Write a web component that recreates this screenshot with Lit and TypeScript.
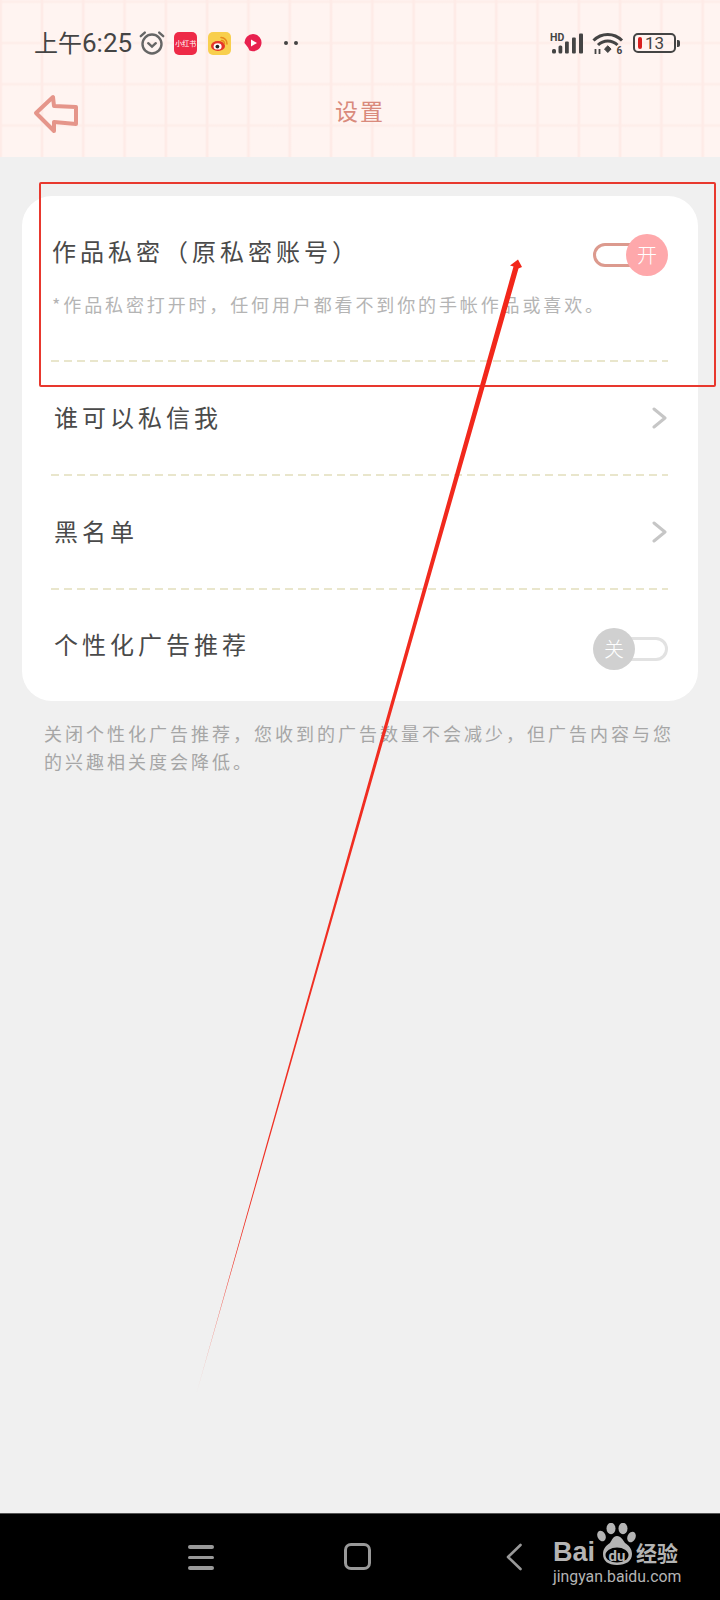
import { LitElement, css, html, svg } from 'lit';
import { customElement } from 'lit/decorators.js';

@customElement('app-root')
export class AppRoot extends LitElement {
  private toggle(on: boolean) {
    return html`
      <div class="toggle ${on ? 'on' : 'off'}">
        <div class="track"></div>
        <div class="knob">${on ? '开' : '关'}</div>
      </div>
    `;
  }

  private chevron() {
    return html`<svg class="chevron" width="16" height="22" viewBox="0 0 16 22">
      <path d="M2 2l11 9-11 9" fill="none" stroke="#c6c6c6" stroke-width="3" stroke-linejoin="round" stroke-linecap="round" />
    </svg>`;
  }

  private statusLeft() {
    return html`
      <div class="status-left">
        <span class="time">上午<span class="digits">6:25</span></span>
        <svg class="alarm" width="26" height="26" viewBox="0 0 26 26" fill="none" stroke="#666" stroke-width="2.4" stroke-linecap="round">
          <circle cx="13" cy="14" r="9.5" />
          <path d="M9.2 13.2l3.8 3.4 3.8-3.4" />
          <path d="M1.8 6.2l4-3.6M24.2 6.2l-4-3.6" />
        </svg>
        <div class="app-red">小红书</div>
        <svg class="weibo" width="23" height="23" viewBox="0 0 23 23">
          <rect width="23" height="23" rx="5" fill="#f8cf4e" />
          <ellipse cx="10" cy="14" rx="7" ry="5" fill="#e6352b" />
          <ellipse cx="9.6" cy="14.4" rx="4" ry="3.2" fill="#fff" />
          <circle cx="9.4" cy="14.6" r="1.9" fill="#222" />
          <path d="M13 5.5a6 6 0 0 1 6 6.5M13.5 8.5a3 3 0 0 1 3 3.3" fill="none" stroke="#e98a1e" stroke-width="1.6" stroke-linecap="round" />
        </svg>
        <svg class="play" width="20" height="20" viewBox="0 0 20 20">
          <path d="M10 1a8.6 8.6 0 1 1-3.5 16.5L5 14.5 1.5 10A8.6 8.6 0 0 1 10 1z" fill="#e8214f" />
          <path d="M8 6.4l6 3.6-6 3.6z" fill="#fff" />
        </svg>
        <span class="dots"><i></i><i></i></span>
      </div>
    `;
  }

  private statusRight() {
    return html`
      <div class="status-right">
        <svg width="36" height="24" viewBox="0 0 36 24" fill="#444">
          <text x="0" y="10" font-size="10.5" font-weight="700" font-family="Roboto, sans-serif">HD</text>
          <rect x="2" y="18" width="4" height="4.5" rx="1.5" />
          <rect x="8.5" y="14.5" width="3.8" height="8" rx="1.5" />
          <rect x="15" y="10.5" width="3.8" height="12" rx="1" />
          <rect x="22" y="6.5" width="3.8" height="16" rx="1" />
          <rect x="29" y="2.5" width="4" height="20" rx="1" />
        </svg>
        <svg width="32" height="24" viewBox="0 0 32 24" fill="none" stroke="#444" stroke-width="3">
          <path d="M1.5 9.5C9.5 1.5 22 1.5 30 9.5" />
          <path d="M6 14C11.5 8.5 20 8.5 25.5 14" />
          <path d="M12.5 18l3.3-3.2 3.3 3.2-3.3 3.5z" fill="#444" stroke-width="1" />
          <text x="24.5" y="23" font-size="10" font-weight="700" fill="#444" stroke="none" font-family="Roboto, sans-serif">6</text>
          <path d="M3.5 18v5M7.5 18v5" stroke-width="1.8" />
        </svg>
        <div class="battery">
          <div class="battery-body"><i></i><span>13</span></div>
          <div class="battery-nub"></div>
        </div>
      </div>
    `;
  }

  private navBar() {
    return html`
      <div class="navbar">
        <div class="menu"><i></i><i></i><i></i></div>
        <div class="home"></div>
        <svg class="back-sys" width="18" height="28" viewBox="0 0 18 28">
          <path d="M15.5 2L3 14l12.5 12" fill="none" stroke="#999" stroke-width="2.6" stroke-linecap="round" stroke-linejoin="round" />
        </svg>
        <div class="wm">
          <div class="wm-top">
            <span class="wm-bai">Bai</span>
            <svg class="paw" width="39" height="42" viewBox="0 0 39 42">
              <g fill="#b4b4b4">
                <ellipse cx="4.5" cy="13" rx="4" ry="5.5" transform="rotate(-25 4.5 13)" />
                <ellipse cx="14" cy="5.5" rx="4.5" ry="5.7" />
                <ellipse cx="26" cy="5.5" rx="4.5" ry="5.7" />
                <ellipse cx="34.5" cy="14" rx="4" ry="5.5" transform="rotate(25 34.5 14)" />
                <path d="M20 13c4 0 6 4 8 7 3 2 7 5 7 11 0 7-6 11-15 11S6 38 6 31c0-6 4-9 7-11 2-3 3-7 7-7z" />
              </g>
              <ellipse cx="20" cy="32" rx="11.5" ry="7.5" fill="#000" />
              <text x="20" y="37.5" text-anchor="middle" font-size="15" font-weight="700" fill="#b4b4b4" font-family="Roboto, sans-serif">du</text>
            </svg>
            <span class="wm-cn">经验</span>
          </div>
          <div class="wm-url">jingyan.baidu.com</div>
        </div>
      </div>
    `;
  }

  private annotation() {
    return html`
      <div class="mark-box"></div>
      <svg class="mark-arrow" width="720" height="1600" viewBox="0 0 720 1600">
        ${svg`<defs>
          <linearGradient id="fade" x1="517" y1="262" x2="196" y2="1395" gradientUnits="userSpaceOnUse">
            <stop offset="0" stop-color="#f2261a" />
            <stop offset="0.88" stop-color="#ef3327" />
            <stop offset="1" stop-color="#f2b0a8" />
          </linearGradient>
        </defs>
        <path d="M518 259.5L522 267 518.5 268.5 196 1395 513.5 266.5 510 265.5z" fill="url(#fade)" />`}
      </svg>
    `;
  }

  render() {
    return html`
      <div class="screen">
        <header class="top">
          <div class="status">
            ${this.statusLeft()} ${this.statusRight()}
          </div>
          <div class="titlebar">
            <svg class="back" width="46" height="40" viewBox="0 0 46 40">
              <path d="M3 19L20 3l1 9 22 1v17l-22-2 0 9z" fill="none" stroke="#e5958a" stroke-width="4" stroke-linejoin="round" />
            </svg>
            <div class="page-title">设置</div>
          </div>
        </header>
        <main class="body">
          <section class="card">
            <div class="row first">
              <div class="row-head">
                <span class="label">作品私密（原私密账号）</span>
                ${this.toggle(true)}
              </div>
              <div class="sub">*作品私密打开时，任何用户都看不到你的手帐作品或喜欢。</div>
            </div>
            <div class="dash"></div>
            <div class="row"><span class="label">谁可以私信我</span>${this.chevron()}</div>
            <div class="dash"></div>
            <div class="row"><span class="label">黑名单</span>${this.chevron()}</div>
            <div class="dash"></div>
            <div class="row last"><span class="label">个性化广告推荐</span>${this.toggle(false)}</div>
          </section>
          <p class="note">关闭个性化广告推荐，您收到的广告数量不会减少，但广告内容与您的兴趣相关度会降低。</p>
        </main>
        ${this.navBar()} ${this.annotation()}
      </div>
    `;
  }

  static styles = css`
    :host {
      display: block;
      font-family: "Noto Sans CJK SC", "Noto Sans", sans-serif;
    }
    .screen {
      position: relative;
      width: 720px;
      height: 1600px;
      display: flex;
      flex-direction: column;
      background: #f0f0f0;
      overflow: hidden;
    }

    /* header with the notebook grid */
    .top {
      height: 157px;
      background-color: #fff4f1;
      background-image:
        linear-gradient(90deg, transparent 0, #feebe7 1.5px, #feebe7 2.5px, transparent 4px),
        linear-gradient(180deg, transparent 0, #feeeea 1.5px, #feeeea 2.5px, transparent 4px);
      background-size: 41.3px 41.3px;
      background-position: 40px 41px;
    }
    .status {
      height: 84px;
      box-sizing: border-box;
      display: flex;
      align-items: center;
      justify-content: space-between;
      padding: 2px 40px 0 34px;
    }
    .status-left,
    .status-right {
      display: flex;
      align-items: center;
    }
    .time {
      font-size: 24px;
      color: #444;
      line-height: 1;
    }
    .digits {
      font-family: Roboto, sans-serif;
      font-size: 26px;
    }
    .alarm {
      margin-left: 7px;
    }
    .app-red {
      margin-left: 9px;
      width: 23px;
      height: 23px;
      border-radius: 5px;
      background: #ee2a47;
      color: #fff;
      font-size: 7px;
      line-height: 23px;
      text-align: center;
      white-space: nowrap;
    }
    .weibo {
      margin-left: 11px;
    }
    .play {
      margin-left: 12px;
    }
    .dots {
      display: flex;
      gap: 6px;
      margin-left: 21px;
    }
    .dots i {
      width: 4px;
      height: 4px;
      border-radius: 50%;
      background: #444;
    }
    .status-right {
      gap: 6px;
    }
    .battery {
      display: flex;
      align-items: center;
      gap: 1px;
      margin-left: 3px;
    }
    .battery-body {
      width: 43px;
      height: 20px;
      box-sizing: border-box;
      border: 2px solid #444;
      border-radius: 5px;
      display: flex;
      align-items: center;
      gap: 3px;
      padding-left: 3px;
      color: #444;
      font-family: Roboto, sans-serif;
      font-size: 17px;
      line-height: 1;
    }
    .battery-body i {
      width: 4px;
      height: 12px;
      border-radius: 2px;
      background: #d9201f;
    }
    .battery-nub {
      width: 3px;
      height: 7px;
      border-radius: 0 2px 2px 0;
      background: #444;
    }
    .titlebar {
      position: relative;
      height: 73px;
      box-sizing: border-box;
      padding-bottom: 22px;
      display: flex;
      align-items: center;
      justify-content: center;
    }
    .back {
      position: absolute;
      left: 33px;
      top: 10px;
    }
    .page-title {
      color: #d98a7c;
      font-size: 23px;
      letter-spacing: 2px;
    }

    /* settings card */
    .body {
      flex: 1;
      padding: 39px 22px 0;
    }
    .card {
      background: #fff;
      border-radius: 30px;
      height: 505px;
      display: flex;
      flex-direction: column;
    }
    .row {
      height: 112px;
      padding: 0 30px 0 32px;
      display: flex;
      align-items: center;
      justify-content: space-between;
    }
    .row > .label {
      margin-bottom: 3px;
    }
    .row.first {
      height: 164px;
      box-sizing: border-box;
      padding: 38px 30px 0 30px;
      display: block;
    }
    .row.last {
      height: 111px;
    }
    .row.last .toggle {
      margin-top: 6px;
    }
    .row-head {
      display: flex;
      align-items: flex-start;
      justify-content: space-between;
    }
    .label {
      color: #4a4a4a;
      font-size: 24px;
      line-height: 34px;
      letter-spacing: 4px;
      white-space: nowrap;
    }
    .sub {
      margin-top: 14px;
      color: #b4b4b4;
      font-size: 18px;
      line-height: 28px;
      letter-spacing: 2.87px;
      white-space: nowrap;
    }
    .dash {
      height: 2px;
      margin: 0 30px 0 29px;
      background: repeating-linear-gradient(90deg, #e9e6cc 0 8px, transparent 8px 13px);
    }
    .chevron {
      flex: none;
    }
    .toggle {
      position: relative;
      width: 75px;
      height: 42px;
      flex: none;
    }
    .track {
      position: absolute;
      top: 9px;
      width: 52px;
      height: 24px;
      box-sizing: border-box;
      border-radius: 12px;
      border: 3px solid;
    }
    .knob {
      position: absolute;
      top: 0;
      width: 42px;
      height: 42px;
      border-radius: 50%;
      color: #fff;
      font-size: 20px;
      font-weight: 300;
      line-height: 42px;
      text-align: center;
    }
    .on .track {
      left: 0;
      border-color: #dc9a8e;
    }
    .on .knob {
      right: 0;
      background: #fea8ab;
    }
    .off .track {
      right: 0;
      border-color: #e2e2e2;
    }
    .off .knob {
      left: 0;
      background: #d0d0d0;
    }
    .note {
      margin: 18px 0 0;
      padding: 0 22px;
      color: #a6a6a6;
      font-size: 18px;
      line-height: 28px;
      letter-spacing: 3px;
    }

    /* system nav bar */
    .navbar {
      position: relative;
      height: 87px;
      background: #000;
      border-top: 1px solid #555;
      box-sizing: border-box;
    }
    .menu {
      position: absolute;
      left: 188px;
      top: 31px;
      width: 26px;
      display: flex;
      flex-direction: column;
      gap: 7px;
    }
    .menu i {
      height: 3.5px;
      border-radius: 2px;
      background: #999;
    }
    .home {
      position: absolute;
      left: 344px;
      top: 29px;
      width: 27px;
      height: 27px;
      box-sizing: border-box;
      border: 3px solid #999;
      border-radius: 7px;
    }
    .back-sys {
      position: absolute;
      left: 505px;
      top: 29px;
    }
    .wm {
      position: absolute;
      left: 553px;
      top: 9px;
      width: 130px;
      color: #b4b4b4;
    }
    .wm-top {
      display: flex;
      align-items: flex-start;
      height: 45px;
    }
    .wm-bai {
      font-family: "Liberation Sans", sans-serif;
      font-size: 27px;
      font-weight: 700;
      line-height: 30px;
      width: 44px;
      margin-top: 14px;
      flex: none;
    }
    .paw {
      flex: none;
    }
    .wm-cn {
      font-size: 21px;
      font-weight: 700;
      line-height: 24px;
      white-space: nowrap;
      margin-top: 17px;
    }
    .wm-url {
      font-family: Roboto, sans-serif;
      font-size: 15.8px;
      line-height: 18px;
      white-space: nowrap;
    }

    /* hand drawn annotation over the screenshot */
    .mark-box {
      position: absolute;
      left: 39px;
      top: 182px;
      width: 677px;
      height: 205px;
      box-sizing: border-box;
      border: 2px solid #e8382e;
      border-radius: 2px;
      pointer-events: none;
    }
    .mark-arrow {
      position: absolute;
      left: 0;
      top: 0;
      pointer-events: none;
    }
  `;
}
